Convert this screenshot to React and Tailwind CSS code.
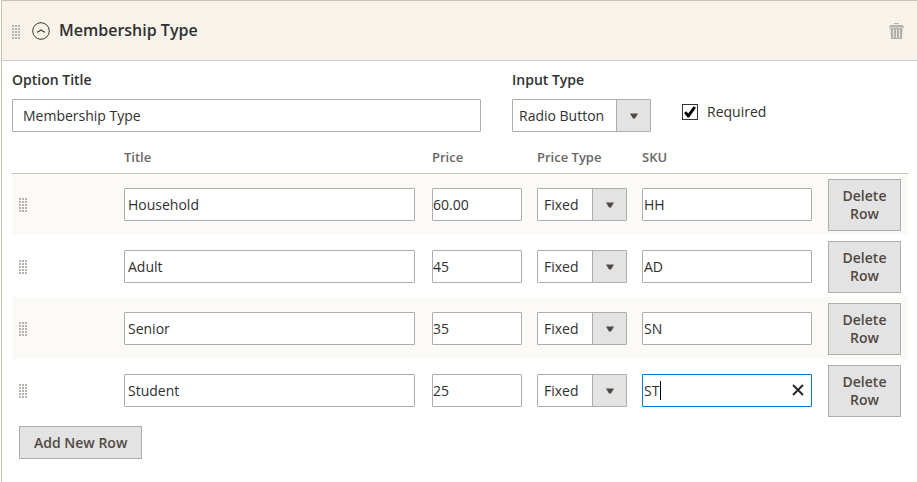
import { useState } from "react";

const initialRows = [
  { id: 1, title: "Household", price: "60.00", sku: "HH" },
  { id: 2, title: "Adult", price: "45", sku: "AD" },
  { id: 3, title: "Senior", price: "35", sku: "SN" },
  { id: 4, title: "Student", price: "25", sku: "ST", active: true },
];

const inputClass =
  "block h-[33px] w-full rounded-[1px] border border-[#adadad] bg-white text-sm text-[#303030] outline-none";

function DragHandle() {
  const dots = [];
  for (let y = 0; y < 5; y++) {
    for (let x = 0; x < 3; x++) dots.push([x * 3, y * 3]);
  }
  return (
    <button type="button" aria-label="Drag to reorder" className="block cursor-move">
      <svg width="8" height="14" viewBox="0 0 8 14" fill="#b5b3ae" shapeRendering="crispEdges" className="block">
        {dots.map(([x, y]) => (
          <rect key={`${x}-${y}`} x={x} y={y} width="2" height="2" />
        ))}
      </svg>
    </button>
  );
}

function SelectBox({ id, label, options, compact }) {
  return (
    <div className="relative">
      <select
        id={id}
        aria-label={label}
        className={`block h-[33px] w-full appearance-none rounded-[1px] border border-[#adadad] bg-white pr-9 pl-1.5 text-sm text-[#303030] outline-none ${compact ? "pt-0.5" : ""}`}
      >
        {options.map((option) => (
          <option key={option}>{option}</option>
        ))}
      </select>
      <span className="pointer-events-none absolute inset-y-px right-px flex w-[34px] items-center justify-center border-l border-[#adadad] bg-[#e3e3e3]">
        <svg width="8" height="6" viewBox="0 0 8 6" className="mt-px block">
          <path d="M0 0.5H8L5 5.5H3Z" fill="#514943" />
        </svg>
      </span>
    </div>
  );
}

function OptionRow({ row, onChange, onDelete }) {
  return (
    <tr className="h-[62px] odd:bg-[#fbfaf6]">
      <td className="pt-0.5 pl-[7px]">
        <DragHandle />
      </td>
      <td className="pr-[17px]">
        <input
          aria-label="Title"
          className={`${inputClass} px-[3px]`}
          value={row.title}
          onChange={(e) => onChange(row.id, "title", e.target.value)}
        />
      </td>
      <td className="pr-[15px]">
        <input
          aria-label="Price"
          className={`${inputClass} px-0`}
          value={row.price}
          onChange={(e) => onChange(row.id, "price", e.target.value)}
        />
      </td>
      <td className="pr-[15px]">
        <SelectBox label="Price Type" options={["Fixed", "Percent"]} compact />
      </td>
      <td className="pr-4">
        {row.active ? (
          <div className="relative">
            <input
              aria-label="SKU"
              className="block h-[33px] w-full rounded-[1px] border border-[#007bdb] bg-white px-px text-sm text-[#303030] outline-none"
              value={row.sku}
              onChange={(e) => onChange(row.id, "sku", e.target.value)}
            />
            <span className="pointer-events-none absolute top-[7px] left-[18px] h-[19px] w-px bg-black" />
            <button
              type="button"
              aria-label="Clear SKU"
              className="absolute top-2 right-1.5 flex size-4 items-center justify-center"
              onClick={() => onChange(row.id, "sku", "")}
            >
              <svg width="12" height="12" viewBox="0 0 12 12" className="block">
                <path d="M1 1L11 11M11 1L1 11" stroke="#222" strokeWidth="1.8" fill="none" />
              </svg>
            </button>
          </div>
        ) : (
          <input
            aria-label="SKU"
            className={`${inputClass} px-px`}
            value={row.sku}
            onChange={(e) => onChange(row.id, "sku", e.target.value)}
          />
        )}
      </td>
      <td className="pt-0.5 pr-[7px]">
        <button
          type="button"
          className="block h-[52px] w-full border border-[#adadad] bg-[#e3e3e3] px-3 text-sm leading-[18px] font-semibold text-[#514943]"
          onClick={() => onDelete(row.id)}
        >
          Delete Row
        </button>
      </td>
    </tr>
  );
}

export default function App() {
  const [rows, setRows] = useState(initialRows);
  const [title, setTitle] = useState("Membership Type");
  const [required, setRequired] = useState(true);

  const change = (id, field, value) =>
    setRows(rows.map((r) => (r.id === id ? { ...r, [field]: value } : r)));
  const remove = (id) => setRows(rows.filter((r) => r.id !== id));
  const add = () =>
    setRows([...rows, { id: Date.now(), title: "", price: "", sku: "" }]);

  return (
    <main className="min-h-screen bg-white pl-px font-['Open_Sans',sans-serif] text-sm text-[#303030]">
      <section className="min-h-screen border-t border-l border-[#cac3b4]">
        <header className="flex h-[60px] items-center border-b border-[#cccccc] bg-[#f7f3eb] pr-[13px] pl-2.5">
          <div className="pt-0.5">
            <DragHandle />
          </div>
          <button type="button" aria-label="Collapse section" className="ml-3">
            <svg width="18" height="18" viewBox="0 0 18 18" fill="none" stroke="#41362f" className="block">
              <circle cx="9" cy="9" r="8.3" strokeWidth="1" />
              <path d="M5 10.3C6.7 9.6 7.9 8.8 9 7.8C10.1 8.8 11.3 9.6 13 10.3" strokeWidth="1.1" />
            </svg>
          </button>
          <h2 className="ml-[9px] flex-1 pb-0.5 text-base font-semibold">{title}</h2>
          <button type="button" aria-label="Delete option" className="pt-0.5">
            <svg width="15" height="17" viewBox="0 0 15 17" className="block">
              <path d="M5 0H10V1H5Z" fill="#b3b1ab" />
              <path d="M1 2H14L15 5H0Z" fill="#b3b1ab" />
              <path d="M1.5 5H13.5L13 16H2Z" fill="#b3b1ab" />
              <path d="M1 4.5H14" stroke="#d8d5ce" strokeWidth="1" />
              <path d="M4.5 6V15M7.5 6V15M10.5 6V15" stroke="#e6e3dc" strokeWidth="1" />
            </svg>
          </button>
        </header>

        <div className="pt-[9px] pr-[9px] pl-2.5">
          <div className="grid grid-cols-[1fr_139px_226px] gap-x-[31px]">
            <div>
              <label htmlFor="option-title" className="mb-[9px] block leading-5 font-semibold">
                Option Title
              </label>
              <input
                id="option-title"
                className={`${inputClass} px-2.5`}
                value={title}
                onChange={(e) => setTitle(e.target.value)}
              />
            </div>
            <div>
              <label htmlFor="input-type" className="mb-[9px] block leading-5 font-semibold">
                Input Type
              </label>
              <SelectBox
                id="input-type"
                options={["Radio Button", "Drop-down", "Checkbox", "Multiple Select"]}
              />
            </div>
            <div className="flex items-center self-end pb-2.5">
              <span className="relative block size-4">
                <input
                  id="required"
                  type="checkbox"
                  checked={required}
                  onChange={(e) => setRequired(e.target.checked)}
                  className="block size-4 appearance-none border border-[#333] bg-white"
                />
                {required && (
                  <svg width="16" height="16" viewBox="0 0 16 16" className="pointer-events-none absolute inset-0">
                    <path d="M2.1 9L4.1 7.2L6.2 9.4L11.6 2.2L14 3.8L7.1 13.6H5.6Z" fill="#000" />
                  </svg>
                )}
              </span>
              <label htmlFor="required" className="ml-[9px] leading-5">
                Required
              </label>
            </div>
          </div>

          <table className="mt-[7px] w-full table-fixed border-collapse">
            <colgroup>
              <col className="w-28" />
              <col />
              <col className="w-[105px]" />
              <col className="w-[105px]" />
              <col className="w-[186px]" />
              <col className="w-20" />
            </colgroup>
            <thead>
              <tr className="h-[34px] border-b border-[#cac3b4] text-left text-[13px] text-[#666]">
                <td />
                <th className="pt-[3px] font-semibold">Title</th>
                <th className="pt-[3px] font-semibold">Price</th>
                <th className="pt-[3px] font-semibold">Price Type</th>
                <th className="pt-[3px] font-semibold">SKU</th>
                <td />
              </tr>
            </thead>
            <tbody>
              {rows.map((row) => (
                <OptionRow key={row.id} row={row} onChange={change} onDelete={remove} />
              ))}
            </tbody>
          </table>

          <button
            type="button"
            className="mt-[5px] ml-[7px] block h-[33px] border border-[#adadad] bg-[#e3e3e3] px-3.5 text-sm font-semibold text-[#514943]"
            onClick={add}
          >
            Add New Row
          </button>
        </div>
      </section>
    </main>
  );
}
